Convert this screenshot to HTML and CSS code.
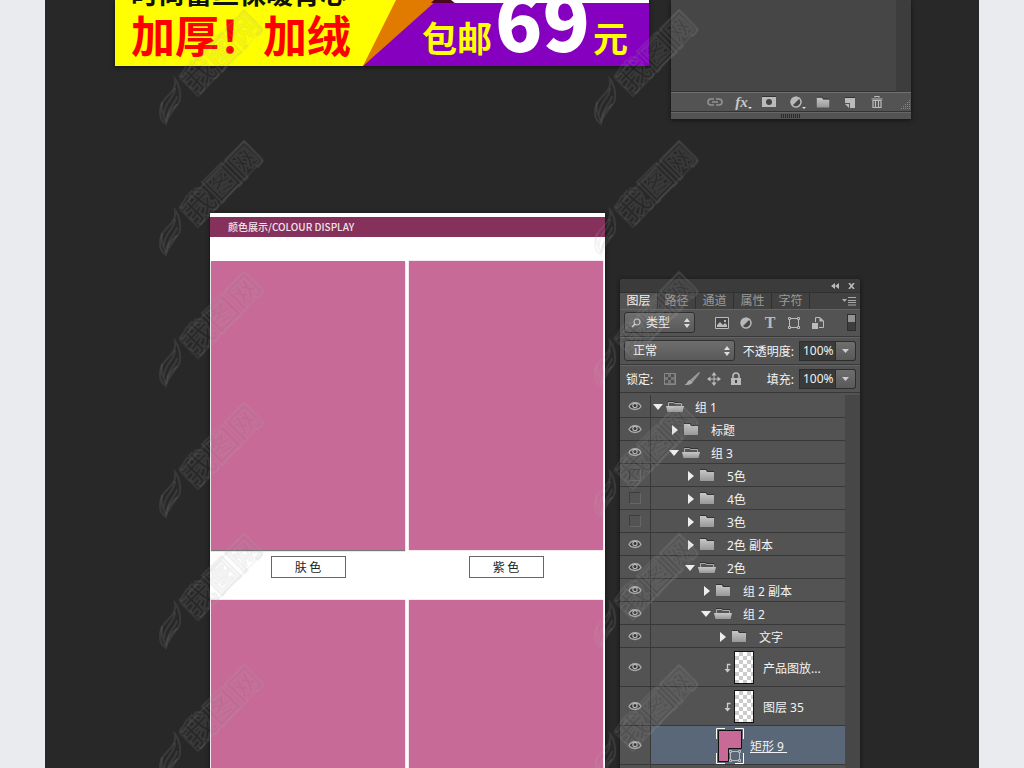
FILE: index.html
```html
<!DOCTYPE html>
<html lang="zh-CN">
<head>
<meta charset="utf-8">
<meta name="viewport" content="width=device-width, initial-scale=1">
<title>颜色展示</title>
<link rel="stylesheet" href="styles.css">
</head>
<body>
<svg class="defs" aria-hidden="true">
  <defs>
    <linearGradient id="metal" x1="0" y1="0" x2="0" y2="1"><stop offset="0" stop-color="#c8c8c8"/><stop offset="1" stop-color="#989898"/></linearGradient>
    <symbol id="eye" viewBox="0 0 14 10"><path d="M1 5.5C3 1 10.500 0 13 5.500C10.500 9.500 3.500 9.500 1 5.500Z" fill="#3c3c3c" stroke="#aaa" stroke-width="1.300"/><circle cx="7" cy="4.500" r="2.700" fill="#b8b8b8"/><circle cx="7" cy="4.500" r="1.500" fill="#333"/></symbol>
    <symbol id="folder" viewBox="0 0 18 13"><path d="M2 1H8L9 3H16V12H2Z" fill="url(#metal)"/><path d="M2 .5H8.300L9.300 2.500H16" fill="none" stroke="#333"/></symbol>
    <symbol id="folder-open" viewBox="0 0 18 13"><path d="M2.500 6V2.500H7.500L8.500 3.500H15.500V6" fill="#555" stroke="#aaa"/><path d="M2 1.500H8L9 2.500H16" fill="none" stroke="#333"/><path d="M0 6H18L16.500 12H1.500Z" fill="url(#metal)"/></symbol>
    <symbol id="right" viewBox="0 0 10 10"><path d="M3 0L9 5L3 10Z" fill="#eee"/></symbol>
    <symbol id="down" viewBox="0 0 10 10"><path d="M0 2H10L5 8Z" fill="#eee"/></symbol>
    <symbol id="spin" viewBox="0 0 6 10"><path d="M0 4L3 0L6 4ZM0 6H6L3 10Z" fill="#ddd"/></symbol>
    <symbol id="circle" viewBox="0 0 14 14"><circle cx="7" cy="7" r="5.500" fill="#b8b8b8"/><path d="M3.500 10.500A5 5 0 0 0 10.500 3.500Z" fill="#484848"/><circle cx="7" cy="7" r="5" fill="none" stroke="#b8b8b8" stroke-width="1.200"/></symbol>
    <symbol id="path-box" viewBox="0 0 14 14"><g fill="none" stroke="#bbb"><path d="M4 2.500H10M4 11.500H10M2.500 4V10M11.500 4V10"/><path d="M1.500 1.500h2v2h-2zM10.500 1.500h2v2h-2zM1.500 10.500h2v2h-2zM10.500 10.500h2v2h-2z"/></g></symbol>
    <symbol id="clip" viewBox="0 0 7 10"><path d="M6.500 1.500H3.500V8" fill="none" stroke="#ccc" stroke-width="1.300"/><path d="M.5 6H6.500L3.500 9.500Z" fill="#ccc"/></symbol>
    <pattern id="marks" x="158" y="8" width="435" height="131" patternUnits="userSpaceOnUse">
      <path class="mark-frame" d="M22 70L86 3L104 22L40 88Z"/>
      <text class="mark-text" transform="translate(72 52) rotate(-45)" text-anchor="middle">我图网</text>
      <g class="mark-flame"><path d="M17 71C20 87 1 88 2 105C2 110 5 114 8 116C8 107 12 101 20 96C24 91 22 77 17 71Z"/><path d="M17 80C17 91 6 93 6 107M19 88C18 95 11 98 9 109M4 94C2 104 6 109 8 113M19 96C16 103 11 106 8 114"/></g>
    </pattern>
  </defs>
</svg>

<main class="stage">
  <section class="top-row">
    <article class="banner">
      <svg class="banner-art" viewBox="0 0 534 66" preserveAspectRatio="none" aria-hidden="true">
        <path d="M0 0H534V66H0Z" fill="#ff0"/><path d="M248 66L281 0H534V66Z" fill="#e17b00"/><path d="M248 66L322 0H534V66Z" fill="#8600c0"/><path d="M319 0H338V3H316Z" fill="#4b071d"/><path d="M336 0H534V3H340Z" fill="#fff"/>
      </svg>
      <div class="banner-copy">
        <p class="banner-line">时尚蕾丝保暖背心</p>
        <p class="banner-offer">加厚！加绒</p>
      </div>
      <p class="banner-price"><span>包邮</span><strong>69</strong><span>元</span></p>
    </article>

    <aside class="panel panel-end">
      <div class="empty-list"></div>
      <div class="toolbar">
        <button aria-label="链接图层"><svg width="16" height="14" viewBox="0 0 16 14"><path d="M7 4H4a3 3 0 0 0 0 6H7M9 4h3a3 3 0 0 1 0 6H9M5 7h6" fill="none" stroke="#929292" stroke-width="1.600"/></svg></button>
        <button class="fx" aria-label="图层样式"><i>fx</i><span class="dot"></span></button>
        <button aria-label="添加蒙版"><svg width="14" height="14" viewBox="0 0 14 14"><path d="M0 2H14V12H0Z" fill="#bbb"/><path d="M0 1.500H14" stroke="#333"/><circle cx="7" cy="7" r="3" fill="#444"/></svg></button>
        <button aria-label="调整图层"><svg width="14" height="14"><use href="#circle"/></svg><span class="dot"></span></button>
        <button aria-label="新建组"><svg width="16" height="13"><use href="#folder"/></svg></button>
        <button aria-label="新建图层"><svg width="12" height="13" viewBox="0 0 12 13"><path d="M1 2H11V12H6V7H1Z" fill="#bbb"/><path d="M1 8H5V12Z" fill="#bbb"/><path d="M1 1.500H11" stroke="#333"/></svg></button>
        <button aria-label="删除图层"><svg width="12" height="14" viewBox="0 0 12 14"><path d="M4 2.500V1.500H8V2.500M.5 4H11.500M2 5.500H10V12.500H2ZM4.500 6V12M7.500 6V12" fill="none" stroke="#bbb" stroke-width="1.200"/></svg></button>
        <svg class="resize" width="10" height="10" viewBox="0 0 10 10" aria-hidden="true"><path d="M9.500 0V10M7.500 2V10M5.500 4V10M3.500 6V10M1.500 8V10" stroke="#888" stroke-dasharray="1 1"/></svg>
      </div>
      <div class="grip"><span></span></div>
    </aside>
  </section>

  <section class="bottom-row">
    <article class="card">
      <h1 class="card-title">颜色展示/COLOUR DISPLAY</h1>
      <div class="swatches">
        <figure><div class="swatch swatch-shadow"></div><figcaption>肤 色</figcaption></figure>
        <figure><div class="swatch"></div><figcaption>紫 色</figcaption></figure>
        <figure><div class="swatch"></div></figure>
        <figure><div class="swatch"></div></figure>
      </div>
    </article>

    <aside class="panel layers">
      <header class="panel-bar">
        <button aria-label="折叠"><svg width="8" height="6" viewBox="0 0 8 6"><path d="M4 0V6L0 3ZM8 0V6L4 3Z" fill="#bbb"/></svg></button>
        <button aria-label="关闭"><svg width="7" height="6" viewBox="0 0 7 6"><path d="M1 0L6 6M6 0L1 6" stroke="#bbb" stroke-width="1.600"/></svg></button>
      </header>
      <nav class="tabs">
        <button class="active">图层</button><button>路径</button><button>通道</button><button>属性</button><button>字符</button>
        <button class="menu" aria-label="面板菜单"><svg width="14" height="9" viewBox="0 0 14 9"><path d="M0 2H5L2.500 5Z" fill="#aaa"/><path d="M6 .5H14M6 3.500H14M6 5.500H14M6 8H14" stroke="#aaa"/></svg></button>
      </nav>
      <div class="row filter-row">
        <div class="pick pick-kind">
          <select aria-label="类型"><option>类型</option></select>
          <svg class="search" width="10" height="10" viewBox="0 0 10 10"><circle cx="6" cy="4" r="3" fill="none" stroke="#ccc" stroke-width="1.200"/><path d="M4 6L1 9" stroke="#ccc" stroke-width="1.600"/></svg>
          <svg class="spin" width="6" height="10"><use href="#spin"/></svg>
        </div>
        <div class="filters">
          <button aria-label="像素"><svg width="14" height="14" viewBox="0 0 14 14"><path d="M.5 1.500H13.500V12.500H.5Z" fill="#444" stroke="#bbb"/><path d="M2 11V9L5 6L8 9L10 7L12 9V11Z" fill="#bbb"/><path d="M9 4h2v2H9z" fill="#bbb"/></svg></button>
          <button aria-label="调整"><svg width="14" height="14"><use href="#circle"/></svg></button>
          <button class="type" aria-label="文字">T</button>
          <button aria-label="形状"><svg width="14" height="14"><use href="#path-box"/></svg></button>
          <button aria-label="智能对象"><svg width="14" height="14" viewBox="0 0 14 14"><path d="M4.500 6V1.500H9L12.500 5V11.500H8" fill="none" stroke="#bbb"/><path d="M8.500 1V5.500H13M1 7H7V13H1Z" fill="#bbb"/></svg></button>
        </div>
        <button class="switch" aria-label="筛选开关"><span></span></button>
      </div>
      <div class="row">
        <div class="pick pick-mode">
          <select aria-label="混合模式"><option>正常</option></select>
          <svg class="spin" width="6" height="10"><use href="#spin"/></svg>
        </div>
        <div class="amount"><label for="opacity">不透明度:</label><input id="opacity" value="100%"><button aria-label="调整不透明度"><svg width="7" height="4" viewBox="0 0 7 4"><path d="M0 0H7L3.500 4Z" fill="#ccc"/></svg></button></div>
      </div>
      <div class="row">
        <span class="lock-label">锁定:</span>
        <div class="locks">
          <button aria-label="锁定透明像素"><svg width="12" height="12" viewBox="0 0 12 12"><path d="M.5.5H11.500V11.500H.5Z" fill="#777" stroke="#888"/><path d="M1 1h3v3H1zM7 1h3v3H7zM4 4h3v3H4zM1 7h3v3H1zM7 7h3v3H7z" fill="#505050"/></svg></button>
          <button aria-label="锁定图像像素"><svg width="16" height="14" viewBox="0 0 16 14"><path d="M15 0L16 1L9 10L6 8Z" fill="#999"/><path d="M6 8L9 10C7 13 4 13 0 13C4 12 3 8 6 8Z" fill="#aaa"/></svg></button>
          <button aria-label="锁定位置"><svg width="14" height="14" viewBox="0 0 14 14"><path d="M7 2V12M2 7H12" stroke="#bbb"/><path d="M4.500 3.500L7 0L9.500 3.500ZM4.500 10.500L7 14L9.500 10.500ZM3.500 4.500L0 7L3.500 9.500ZM10.500 4.500L14 7L10.500 9.500Z" fill="#bbb"/></svg></button>
          <button aria-label="全部锁定"><svg width="12" height="14" viewBox="0 0 12 14"><path d="M3 7V4a3 3 0 0 1 6 0V7" fill="none" stroke="#bbb" stroke-width="1.600"/><path d="M1 6H11V13H1Z" fill="#bbb"/><path d="M6 8V11" stroke="#444" stroke-width="2"/></svg></button>
        </div>
        <div class="amount"><label for="fill">填充:</label><input id="fill" value="100%"><button aria-label="调整填充"><svg width="7" height="4" viewBox="0 0 7 4"><path d="M0 0H7L3.500 4Z" fill="#ccc"/></svg></button></div>
      </div>
      <ul class="list">
        <li><button class="vis" aria-label="可见"><svg><use href="#eye"/></svg></button><div class="item"><svg class="tri"><use href="#down"/></svg><svg class="fold"><use href="#folder-open"/></svg>组 1</div></li>
        <li><button class="vis" aria-label="可见"><svg><use href="#eye"/></svg></button><div class="item d1"><svg class="tri"><use href="#right"/></svg><svg class="fold"><use href="#folder"/></svg>标题</div></li>
        <li><button class="vis" aria-label="可见"><svg><use href="#eye"/></svg></button><div class="item d1"><svg class="tri"><use href="#down"/></svg><svg class="fold"><use href="#folder-open"/></svg>组 3</div></li>
        <li><button class="vis" aria-label="隐藏"><span></span></button><div class="item d2"><svg class="tri"><use href="#right"/></svg><svg class="fold"><use href="#folder"/></svg>5色</div></li>
        <li><button class="vis" aria-label="隐藏"><span></span></button><div class="item d2"><svg class="tri"><use href="#right"/></svg><svg class="fold"><use href="#folder"/></svg>4色</div></li>
        <li><button class="vis" aria-label="隐藏"><span></span></button><div class="item d2"><svg class="tri"><use href="#right"/></svg><svg class="fold"><use href="#folder"/></svg>3色</div></li>
        <li><button class="vis" aria-label="可见"><svg><use href="#eye"/></svg></button><div class="item d2"><svg class="tri"><use href="#right"/></svg><svg class="fold"><use href="#folder"/></svg>2色 副本</div></li>
        <li><button class="vis" aria-label="可见"><svg><use href="#eye"/></svg></button><div class="item d2"><svg class="tri"><use href="#down"/></svg><svg class="fold"><use href="#folder-open"/></svg>2色</div></li>
        <li><button class="vis" aria-label="可见"><svg><use href="#eye"/></svg></button><div class="item d3"><svg class="tri"><use href="#right"/></svg><svg class="fold"><use href="#folder"/></svg>组 2 副本</div></li>
        <li><button class="vis" aria-label="可见"><svg><use href="#eye"/></svg></button><div class="item d3"><svg class="tri"><use href="#down"/></svg><svg class="fold"><use href="#folder-open"/></svg>组 2</div></li>
        <li><button class="vis" aria-label="可见"><svg><use href="#eye"/></svg></button><div class="item d4"><svg class="tri"><use href="#right"/></svg><svg class="fold"><use href="#folder"/></svg>文字</div></li>
        <li class="tall"><button class="vis" aria-label="可见"><svg><use href="#eye"/></svg></button><div class="item layer"><svg class="clip"><use href="#clip"/></svg><span class="thumb"></span>产品图放...</div></li>
        <li class="tall"><button class="vis" aria-label="可见"><svg><use href="#eye"/></svg></button><div class="item layer"><svg class="clip"><use href="#clip"/></svg><span class="thumb"></span>图层 35</div></li>
        <li class="tall selected"><button class="vis" aria-label="可见"><svg><use href="#eye"/></svg></button><div class="item shape">
          <svg width="28" height="36" viewBox="0 0 28 36" aria-hidden="true"><path d="M.5 11V.5H9M19 .5H27.500V11M27.500 25V35.500H19M9 35.500H.5V25" fill="none" stroke="#fff"/><path d="M2.500 2.500H25.500V20.500H12.500V33.500H2.500Z" fill="#c86a97" stroke="#111"/><svg x="12" y="21" width="14" height="14"><use href="#path-box"/></svg></svg><u>矩形 9&nbsp;</u></div></li>
        <li><button class="vis" aria-label="隐藏"></button><div class="item"></div></li>
      </ul>
    </aside>
  </section>
  <svg class="marks" aria-hidden="true"><rect width="100%" height="100%" fill="url(#marks)"/></svg>
</main>
</body>
</html>
```

FILE: styles.css
```css
* { box-sizing: border-box; }
body {
  margin: 0;
  background: #eaebef;
  font-family: "Noto Sans", "Noto Sans CJK SC", sans-serif;
}
p, h1, figure, ul { margin: 0; padding: 0; }
button, input, select { font: inherit; color: inherit; margin: 0; padding: 0; border: 0; background: none; }
button { display: flex; align-items: center; justify-content: center; }
svg { display: block; flex: none; }
.defs { position: absolute; width: 0; height: 0; }

.stage {
  max-width: 934px;
  height: 100vh;
  margin: 0 auto;
  overflow: hidden;
  background: #282828;
}
.top-row { display: flex; align-items: flex-start; gap: 22px; padding: 0 68px 0 70px; }
.bottom-row { display: flex; align-items: flex-start; gap: 15px; padding: 94px 119px 0 165px; }

/* Promotional banner */
.banner {
  position: relative;
  display: flex;
  align-items: flex-end;
  justify-content: space-between;
  flex: 1;
  height: 66px;
  padding: 0 21px 4px 16px;
  overflow: hidden;
  font-family: "Noto Sans CJK SC", sans-serif;
  font-weight: 700;
  white-space: nowrap;
  box-shadow: 0 1px 4px #111;
}
.banner-art { position: absolute; inset: 0; width: 100%; height: 100%; }
.banner-copy, .banner-price { position: relative; }
.banner-copy { padding-bottom: 3px; }
.banner-line { color: #111; font-size: 27px; line-height: 32px; }
.banner-offer { color: #f00; font-size: 44px; line-height: 50px; }
.banner-price { display: flex; align-items: baseline; gap: 3px; color: #ff0; font-size: 35px; line-height: 50px; }
.banner-price strong { color: #fff; font-size: 78px; line-height: 50px; }

/* Panels */
.panel {
  width: 240px;
  flex: none;
  background: #535353;
  color: #f2f2f2;
  font-size: 12px;
  box-shadow: 0 1px 4px #111;
}
.empty-list { height: 92px; border-right: 15px solid #3d3d3d; border-bottom: 1px solid #333; background: #464646; }
.toolbar { display: flex; align-items: center; height: 20px; padding-left: 30px; border-top: 1px solid #707070; border-bottom: 1px solid #333; }
.toolbar button { position: relative; width: 27px; height: 18px; }
.fx { color: #c8c8c8; font-family: "Liberation Serif", serif; font-size: 15px; font-weight: 700; }
.dot { position: absolute; right: 3px; bottom: 2px; border: 2px solid transparent; border-top-color: #ddd; border-bottom: 0; }
.resize { margin-left: auto; margin-top: 6px; margin-right: 1px; }
.grip { display: flex; align-items: center; justify-content: center; height: 7px; border-top: 1px solid #666; }
.grip span { width: 20px; height: 4px; background: repeating-linear-gradient(90deg, #292929 0 1px, #555 1px 2px); }

.layers { margin-top: 66px; border-radius: 3px 3px 0 0; }
.panel-bar { display: flex; align-items: center; justify-content: flex-end; gap: 9px; height: 13px; padding-right: 5px; border-radius: 3px 3px 0 0; background: #3b3b3b; }
.tabs { display: flex; height: 17px; background: #424242; color: #9a9a9a; border-top: 1px solid #303030; }
.tabs button { width: 38px; border-right: 1px solid #303030; line-height: 16px; }
.tabs .active { background: #535353; color: #f2f2f2; }
.tabs .menu { width: auto; margin-left: auto; padding-right: 4px; border: 0; }
.row { display: flex; align-items: center; height: 28px; padding: 0 4px; border-bottom: 1px solid #383838; box-shadow: inset 0 1px #646464; }
.pick { display: grid; align-items: center; height: 21px; border: 1px solid #303030; border-radius: 3px; background: linear-gradient(#6e6e6e, #595959); }
.pick > * { grid-area: 1 / 1; }
.pick select { width: 100%; height: 19px; padding-left: 8px; appearance: none; }
.pick svg { pointer-events: none; }
.pick-kind { width: 71px; }
.pick-kind select { padding-left: 21px; }
.pick-mode { width: 111px; }
.search { margin-left: 6px; }
.spin { justify-self: end; margin-right: 4px; }
.filters { display: flex; gap: 10px; margin-left: 20px; }
.filters button { width: 14px; height: 14px; }
.type { color: #bbb; font-family: "Liberation Serif", serif; font-size: 16px; font-weight: 700; }
.switch { width: 9px; height: 17px; margin-left: auto; align-items: flex-start; border: 1px solid #2d2d2d; background: #3d3d3d; }
.switch span { width: 7px; height: 7px; background: #929292; }
.amount { display: flex; align-items: center; margin-left: auto; white-space: nowrap; }
.amount input { width: 37px; height: 20px; margin-left: 5px; padding-left: 3px; border: 1px solid #2d2d2d; background: #3a3a3a; }
.amount button { width: 20px; height: 20px; border: 1px solid #2d2d2d; border-left: 0; border-radius: 0 3px 3px 0; background: linear-gradient(#6e6e6e, #595959); }
.lock-label { padding-left: 2px; }
.locks { display: flex; align-items: center; gap: 8px; margin-left: 10px; }
.locks button { width: 14px; height: 14px; }

/* Layer tree */
.list { margin-top: 2px; border-right: 15px solid #474747; list-style: none; }
.list li { display: flex; height: 23px; border-bottom: 1px solid #383838; }
.list .tall { height: 39px; }
.vis { width: 31px; border-right: 1px solid #383838; }
.vis svg { width: 14px; height: 10px; }
.vis span { width: 12px; height: 12px; border: 1px solid #3d3d3d; border-right-color: #666; border-bottom-color: #666; }
.item { display: flex; align-items: center; flex: 1; padding: 1px 0 0 2px; white-space: nowrap; }
.d1 { padding-left: 18px; }
.d2 { padding-left: 34px; }
.d3 { padding-left: 50px; }
.d4 { padding-left: 66px; }
.tri { width: 10px; height: 10px; }
.fold { width: 18px; height: 13px; margin: 0 11px 0 3px; }
.layer { padding-left: 73px; }
.clip { width: 7px; height: 10px; }
.thumb { width: 20px; height: 33px; margin: 0 9px 0 3px; border: 1px solid #111; background: repeating-conic-gradient(#ccc 0 25%, #fff 0 50%) 0 0 / 8px 8px; }
.shape { gap: 6px; padding-left: 65px; }
.selected .item { background: #596779; }

/* Colour card */
.card { flex: 1; min-height: 700px; padding-top: 4px; background: #fff; font-family: "Noto Sans CJK SC", sans-serif; box-shadow: 0 1px 4px #111; }
.card-title { padding-left: 18px; background: #86305c; color: #f0e4ea; font-size: 10px; font-weight: 500; line-height: 20px; }
.swatches { display: grid; grid-template-columns: 1fr 1fr; gap: 22px 4px; padding: 24px 2px 0 1px; }
.swatch { height: 289px; background: #c86a97; box-shadow: 0 0 1px #c86a97; }
.swatch-shadow { box-shadow: 0 1px 1px #777; }
.swatches figcaption { width: 75px; height: 22px; margin: 6px auto 0; border: 1px solid #666; color: #222; font-size: 12px; line-height: 19px; text-align: center; }

/* Repeating mark laid over the whole page */
.marks { position: absolute; inset: 0; width: 100%; height: 100%; pointer-events: none; }
.mark-frame { fill: none; stroke: rgba(170, 170, 170, 0.1); stroke-width: 2px; }
.mark-text { font-family: "Noto Sans CJK SC", sans-serif; font-size: 32px; font-weight: 700; fill: rgba(40, 40, 40, 0.03); stroke: rgba(170, 170, 170, 0.12); stroke-width: 2px; paint-order: stroke; }
.mark-flame { fill: none; stroke: rgba(170, 170, 170, 0.13); stroke-width: 2px; }
```
